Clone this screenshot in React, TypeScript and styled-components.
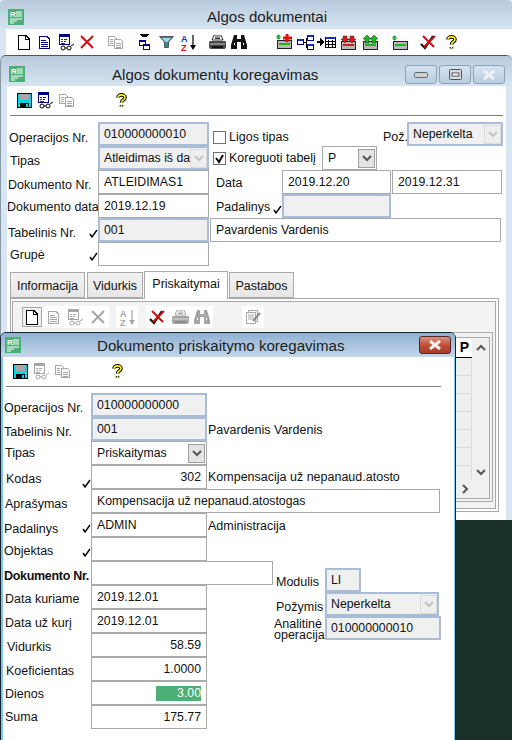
import React from "react";
import styled, { createGlobalStyle } from "styled-components";

const GlobalStyle = createGlobalStyle`
  html, body {
    margin: 0;
    padding: 0;
    background: #1a3129;
    overflow: hidden;
  }
`;

const FONT = '"Liberation Sans", Arial, sans-serif';
const FRAME = "#d8e5f2";
const GRAY = "#a9a9a9";

const Desktop = styled.div`
  position: relative;
  width: 512px;
  height: 740px;
  overflow: hidden;
  background: #1a3129;
  font-family: ${FONT};
  font-size: 12.5px;
  color: #111;
`;

const MainWindow = styled.div`
  position: absolute;
  left: 0;
  top: 0;
  width: 512px;
  height: 520px;
  background: ${FRAME};
`;

const EditWindow = styled.div`
  position: absolute;
  left: 0;
  top: 55px;
  width: 512px;
  height: 465px;
  box-sizing: border-box;
  background: ${FRAME};
  border-top: 1px solid #555;
  border-left: 1px solid #8a98a6;
  border-radius: 6px 6px 0 0;
`;

const DialogWindow = styled.div`
  position: absolute;
  left: 0;
  top: 332px;
  width: 456px;
  height: 420px;
  box-sizing: border-box;
  background: #fff;
  border: 1px solid #16222e;
  border-radius: 6px 6px 0 0;
  box-shadow: inset 2px 0 0 #7fc7e8, inset -1px 0 0 #7fc7e8;
`;

const TitleBar = styled.div<{ $h: number; $dark?: boolean; $iconX: number; $iconY: number; $textX: number; $textY: number }>`
  display: flex;
  box-sizing: border-box;
  height: ${(p) => p.$h}px;
  padding: ${(p) => p.$iconY}px 0 0 ${(p) => p.$iconX}px;
  border-radius: 5px 5px 0 0;
  background: ${(p) =>
    p.$dark
      ? "linear-gradient(#8fb0d2, #c3d7ea)"
      : "linear-gradient(#b8cadc, #d6e4f2)"};
  & > span {
    margin: ${(p) => p.$textY}px 0 0 ${(p) => p.$textX}px;
    font-size: 15.1px;
    line-height: 16px;
    color: #1c1c1c;
    white-space: nowrap;
  }
`;

const MainToolbar = styled.div`
  display: flex;
  align-items: center;
  height: 26px;
  margin-left: 6px;
  padding-left: 8px;
  background: #fff;
`;

const Slot = styled.div<{ $gap?: number }>`
  display: flex;
  flex: none;
  align-items: center;
  justify-content: center;
  width: 20px;
  height: 20px;
  margin-left: ${(p) => p.$gap || 0}px;
`;

const EditClient = styled.div`
  height: 434px;
  margin: 0 6px 0 6px;
  background: #fff;
`;

const SmallToolbar = styled.div<{ $pad: number; $lineLeft: number; $lineRight: number }>`
  display: flex;
  align-items: center;
  box-sizing: border-box;
  height: 30px;
  padding-left: ${(p) => p.$pad}px;
  margin-left: ${(p) => p.$lineLeft}px;
  margin-right: ${(p) => p.$lineRight}px;
  border-bottom: 1px solid #808080;
`;

const FormBlock = styled.div`
  display: flex;
  flex-direction: column;
  margin-top: 6px;
`;

const Row = styled.div`
  display: flex;
  height: 24px;
`;

const Label = styled.div<{ $w: number; $x?: number; $top: number; $bold?: boolean }>`
  display: flex;
  flex: none;
  justify-content: space-between;
  box-sizing: border-box;
  width: ${(p) => p.$w}px;
  padding: ${(p) => p.$top}px 0 0 ${(p) => p.$x || 0}px;
  font-weight: ${(p) => (p.$bold ? "bold" : "normal")};
  letter-spacing: ${(p) => (p.$bold ? "-0.3px" : "0")};
  line-height: 16px;
  white-space: nowrap;
`;

const Note = styled.div<{ $top: number; $left?: number; $w?: number }>`
  flex: none;
  width: ${(p) => (p.$w ? `${p.$w}px` : "auto")};
  padding-top: ${(p) => p.$top}px;
  margin-left: ${(p) => p.$left || 0}px;
  line-height: 16px;
  white-space: nowrap;
`;

const Field = styled.div<{ $w: number; $locked?: boolean; $right?: boolean; $left?: number }>`
  display: flex;
  flex: none;
  align-items: center;
  justify-content: ${(p) => (p.$right ? "flex-end" : "flex-start")};
  box-sizing: border-box;
  width: ${(p) => p.$w}px;
  height: 24px;
  margin-left: ${(p) => p.$left || 0}px;
  padding: 0 ${(p) => (p.$locked ? 4 : 5)}px;
  border: ${(p) => (p.$locked ? "2px solid #a9bdd6" : `1px solid ${GRAY}`)};
  background: ${(p) => (p.$locked ? "#f0f0f0" : "#fff")};
  font-size: 12.3px;
  white-space: nowrap;
  overflow: hidden;
`;

const SelectText = styled.span`
  flex: 1;
  overflow: hidden;
`;

const SelectButton = styled.div<{ $off?: boolean }>`
  display: flex;
  flex: none;
  align-items: center;
  justify-content: center;
  box-sizing: border-box;
  width: 17px;
  height: 19px;
  margin: 0 -4px 0 0;
  border: 1px solid ${(p) => (p.$off ? "#dcdcdc" : "#a0a0a0")};
  background: ${(p) => (p.$off ? "#eeeeee" : "#e4e4e4")};
`;

const Selected = styled.span`
  display: block;
  box-sizing: border-box;
  width: 45px;
  height: 15px;
  line-height: 15px;
  text-align: right;
  background: #4caf76;
  color: #fff;
`;

const CheckBox = styled.div<{ $top: number }>`
  display: flex;
  flex: none;
  align-items: center;
  justify-content: center;
  box-sizing: border-box;
  width: 13px;
  height: 13px;
  margin: ${(p) => p.$top}px 3px 0 4px;
  border: 1px solid #707070;
  background: #fff;
`;

const TabRow = styled.div`
  display: flex;
  align-items: flex-end;
  height: 26px;
  margin: 6px 0 0 3px;
`;

const Tab = styled.div<{ $w: number; $active?: boolean; $gap?: number }>`
  position: relative;
  z-index: ${(p) => (p.$active ? 1 : 0)};
  box-sizing: border-box;
  width: ${(p) => p.$w}px;
  height: ${(p) => (p.$active ? 28 : 26)}px;
  margin-left: ${(p) => p.$gap || 0}px;
  margin-bottom: ${(p) => (p.$active ? -1 : 0)}px;
  border: 1px solid ${GRAY};
  border-bottom: ${(p) => (p.$active ? "none" : `1px solid ${GRAY}`)};
  background: ${(p) => (p.$active ? "#fff" : "linear-gradient(#f2f2f2, #e6e6e6)")};
  line-height: ${(p) => (p.$active ? 24 : 26)}px;
  text-align: center;
  white-space: nowrap;
`;

const TabPanel = styled.div`
  box-sizing: border-box;
  width: 489px;
  height: 214px;
  margin-left: 3px;
  padding: 2px 2px 2px 1px;
  border: 1px solid ${GRAY};
  background: #fff;
`;

const TabInner = styled.div`
  display: flex;
  flex-direction: column;
  box-sizing: border-box;
  height: 100%;
  border: 1px solid ${GRAY};
  background: #f3f3f3;
`;

const PanelToolbar = styled.div`
  display: flex;
  flex: none;
  align-items: flex-start;
  height: 30px;
  padding: 4px 0 0 9px;
  box-sizing: border-box;
`;

const ActiveTool = styled.div`
  display: flex;
  align-items: center;
  justify-content: center;
  box-sizing: border-box;
  width: 20px;
  height: 20px;
  margin-top: 1px;
  border: 1px solid ${GRAY};
  background: #f0f0f0;
`;

const ToolTile = styled.div<{ $gap: number }>`
  display: flex;
  align-items: center;
  height: 22px;
  margin-left: ${(p) => p.$gap}px;
  padding: 0 1px;
  background: #fff;
`;

const GridOuter = styled.div`
  flex: 1;
  min-height: 0;
  margin: 0 2px 6px 2px;
  padding: 4px 2px 2px 2px;
  border: 1px solid ${GRAY};
  border-left: none;
  background: #f3f3f3;
`;

const GridBox = styled.div`
  display: grid;
  grid-template-columns: 1fr 17px;
  grid-template-rows: 1fr 18px;
  box-sizing: border-box;
  height: 100%;
  border: 1px solid ${GRAY};
  background: #efefef;
`;

const GridBody = styled.div`
  display: flex;
  flex-direction: column;
  overflow: hidden;
`;

const HeaderRow = styled.div`
  display: flex;
  flex: none;
  justify-content: flex-end;
  height: 19px;
  border-bottom: 1px solid #000;
  background: #fff;
`;

const HeaderCell = styled.div`
  width: 15px;
  font-size: 14px;
  font-weight: bold;
  line-height: 18px;
  text-align: center;
  color: #000;
`;

const DataRow = styled.div`
  flex: none;
  box-sizing: border-box;
  height: 18px;
  border-bottom: 1px solid #dcdcdc;
  border-right: 1px solid #dcdcdc;
`;

const VScroll = styled.div`
  display: flex;
  flex-direction: column;
  align-items: center;
  justify-content: space-between;
  padding: 6px 0 4px;
  background: #f0f0f0;
`;

const HScroll = styled.div`
  display: flex;
  grid-column: 1 / 3;
  align-items: center;
  justify-content: flex-end;
  padding-right: 20px;
  background: #f0f0f0;
`;

const WindowButtons = styled.div`
  display: flex;
  gap: 2px;
  margin: -1px 0 0 auto;
  padding-right: 7px;
`;

const WinButton = styled.div`
  display: flex;
  align-items: center;
  justify-content: center;
  box-sizing: border-box;
  width: 32px;
  height: 19px;
  border: 1px solid #8ea2b8;
  border-radius: 3px;
  background: linear-gradient(#d6e3f0, #b9cde0);
`;

const CloseButton = styled.div`
  display: flex;
  align-items: center;
  justify-content: center;
  box-sizing: border-box;
  width: 32px;
  height: 18px;
  margin: -1px 4px 0 auto;
  border: 1px solid #4e2a2a;
  border-radius: 3px;
  background: linear-gradient(#dc9183, #c14f38 50%, #a83a28);
`;

const BottomForm = styled.div`
  display: flex;
`;

const Column = styled.div<{ $top?: number; $left?: number }>`
  display: flex;
  flex-direction: column;
  margin-top: ${(p) => p.$top || 0}px;
  margin-left: ${(p) => p.$left || 0}px;
`;

const TwoLine = styled.div`
  flex: none;
  width: 51px;
  padding-top: 3px;
  line-height: 11px;
  white-space: nowrap;
`;

const TickMark = styled.svg<{ $top: number }>`
  flex: none;
  margin-top: ${(p) => p.$top}px;
`;

/* toolbar pictures */

type IconProps = { off?: boolean };
const off = (p: IconProps, c: string) => (p.off ? "#a6a6a6" : c);

const AppIcon = () => (
  <svg width="16" height="16" viewBox="0 0 16 16">
    <rect width="16" height="16" fill="#4caf76" />
    <text x="2" y="8" fontFamily={FONT} fontSize="8" fontWeight="bold" fill="#fff">R</text>
    <path d="M8 3h6M8 5h6M8 7h6M2 10h12M2 12h7M2 14h4" stroke="#fff" fill="none" />
  </svg>
);

const NewDoc = (p: IconProps) => (
  <svg width="12" height="15" viewBox="0 0 12 15" shapeRendering="crispEdges">
    <path d="M.5.5H8L11.5 4v10.500H.5z" fill="#fff" stroke={off(p, "#000")} />
    <path d="M7.500.5v4h4" fill="none" stroke={off(p, "#000")} />
  </svg>
);

const TextDoc = (p: IconProps) => (
  <svg width="11" height="13" viewBox="0 0 11 13" shapeRendering="crispEdges">
    <path d="M.5.5H8L10.500 3v9.500H.5z" fill="#fff" stroke={off(p, "#000080")} />
    <path d="M2 4h5M2 6h7M2 8h7M2 10h7" stroke={off(p, "#000080")} />
  </svg>
);

const Glasses = (p: IconProps) => (
  <svg width="17" height="17" viewBox="0 0 17 17">
    <rect x=".5" y=".5" width="10" height="10" fill="#fff" stroke={off(p, "#000080")} shapeRendering="crispEdges" />
    <rect x="1" y="1" width="9" height="2" fill={off(p, "#000080")} />
    <path d="M2 5h2M5 5h3M2 7h2M5 7h2M2 9h4" stroke={off(p, "#333")} shapeRendering="crispEdges" />
    <circle cx="4" cy="14" r="2" fill="#fff" stroke={off(p, "#000")} />
    <circle cx="10" cy="14" r="2" fill="#fff" stroke={off(p, "#000")} />
    <path d="M6 14h2M12 12l3-2" fill="none" stroke={off(p, "#000")} />
  </svg>
);

const RedX = (p: IconProps) => (
  <svg width="14" height="14" viewBox="0 0 14 14">
    <path d="M1 1l12 12M13 1L1 13" stroke={off(p, "#d01010")} strokeWidth="2" fill="none" />
  </svg>
);

const CopyDocs = (p: IconProps) => (
  <svg width="15" height="13" viewBox="0 0 15 13" shapeRendering="crispEdges">
    <path d="M.5.5h6l2 2v7H.5z" fill="#fff" stroke={off(p, "#000")} />
    <path d="M6.500 3.500h6l2 2v7h-8z" fill="#fff" stroke={off(p, "#000")} />
    <path d="M2 3h3M2 5h3M2 7h3M8 7h5M8 9h5M8 11h5" stroke={off(p, "#000")} />
  </svg>
);

const FilterWin = () => (
  <svg width="11" height="16" viewBox="0 0 11 16" shapeRendering="crispEdges">
    <path d="M0 0h10L7 3H3z" fill="#000" />
    <rect x=".5" y="6.500" width="6" height="5" fill="#fff" stroke="#000080" />
    <rect x="1" y="6" width="5" height="2" fill="#000080" />
    <rect x="4.500" y="10.500" width="6" height="5" fill="#fff" stroke="#000080" />
    <rect x="5" y="10" width="5" height="2" fill="#000080" />
  </svg>
);

const Funnel = () => (
  <svg width="15" height="12" viewBox="0 0 15 12">
    <path d="M.5.500h14l-5 5.500v5.500h-4V6z" fill="#2f8f8f" stroke="#555" />
    <path d="M3 2h9L8.500 6h-2z" fill="#9fd8d8" />
  </svg>
);

const SortAZ = (p: IconProps) => (
  <svg width="15" height="17" viewBox="0 0 15 17">
    <text x="0" y="8" fontFamily={FONT} fontSize="9" fontWeight="bold" fill={off(p, "#1030e0")}>A</text>
    <text x="0" y="16.500" fontFamily={FONT} fontSize="9" fontWeight="bold" fill={off(p, "#e01010")}>Z</text>
    <path d="M12 1v12" stroke={off(p, "#000")} strokeWidth="1.200" />
    <path d="M9 11h6l-3 5z" fill={off(p, "#000")} />
  </svg>
);

const Printer = (p: IconProps) => (
  <svg width="17" height="15" viewBox="0 0 17 15">
    <path d="M5 0h7l2 5H3z" fill="#fff" stroke={off(p, "#333")} />
    <path d="M6 2h5M6 3.500h5" stroke={off(p, "#333")} />
    <path d="M1 6h15a1 1 0 0 1 1 1v5a2 2 0 0 1-2 2H2a2 2 0 0 1-2-2V7z" fill={off(p, "#4a4a4a")} />
    <path d="M1 9h15" stroke={p.off ? "#d8d8d8" : "#bdbdbd"} />
    <path d="M3 12h11" stroke={p.off ? "#8c8c8c" : "#111"} strokeWidth="2" />
  </svg>
);

const Binoculars = (p: IconProps) => (
  <svg width="16" height="14" viewBox="0 0 16 14">
    <path d="M3 0h3v4h4V0h3l3 10v4h-6V7H6v7H0v-4z" fill={off(p, "#111")} />
    <path d="M3 9h1M12 9h1" stroke="#fff" strokeWidth="2" />
  </svg>
);

const Star = () => <path d="M0 3h5M2.500 .5v5M1 1l3 4M4 1L1 5" stroke="#22a030" fill="none" />;

const Tray = ({ band }: { band: string }) => (
  <g shapeRendering="crispEdges">
    <rect x="1.500" y="6.500" width="14" height="8" fill="#b8b8b8" stroke="#222" />
    <rect x="3" y="9" width="11" height="2" fill={band} />
  </g>
);

const TrayPlus = () => (
  <svg width="17" height="16" viewBox="0 0 17 16">
    <Tray band="#18b818" />
    <Star />
    <path d="M11 0v8M7 4h9" stroke="#e01010" strokeWidth="3" />
  </svg>
);

const TreeIcon = () => (
  <svg width="17" height="15" viewBox="0 0 17 15" shapeRendering="crispEdges">
    <path d="M6 7h3M9 3v9M9 3h2M9 12h2" stroke="#000" fill="none" />
    <rect x=".5" y="4.500" width="6" height="5" fill="#fff" stroke="#000080" />
    <rect x="1" y="4" width="5" height="2" fill="#1030c0" />
    <rect x="10.500" y=".5" width="6" height="5" fill="#fff" stroke="#000080" />
    <rect x="11" y="0" width="5" height="2" fill="#1030c0" />
    <rect x="10.500" y="9.500" width="6" height="5" fill="#fff" stroke="#000080" />
    <rect x="11" y="9" width="5" height="2" fill="#1030c0" />
  </svg>
);

const ArrowTable = () => (
  <svg width="19" height="13" viewBox="0 0 19 13" shapeRendering="crispEdges">
    <path d="M0 5h3V2l4 4-4 4V7H0z" fill="#000" />
    <rect x="8.500" y="1.500" width="10" height="10" fill="#fff" stroke="#000" />
    <rect x="9" y="1" width="9" height="2" fill="#1030c0" />
    <path d="M9 5.500h9M9 8.500h9M11.500 4v7M15.500 4v7" stroke="#000" />
  </svg>
);

const TrayArrows = ({ color, down }: { color: string; down?: boolean }) => (
  <svg width="16" height="15" viewBox="0 0 16 15">
    <g transform="translate(-1 0)"><Tray band={color} /></g>
    <path
      d={down ? "M2 1h4v3h2L4 8 0 4h2zM9 1h4v3h2l-4 4-4-4h2z" : "M4 0l4 4H6v4H2V4H0zM11 0l4 4h-2v4H9V4H7z"}
      fill={color}
      stroke="#222"
      strokeWidth=".5"
    />
  </svg>
);

const StarTray = () => (
  <svg width="17" height="15" viewBox="0 0 17 15">
    <Tray band="#18b818" />
    <Star />
  </svg>
);

const RedCheck = () => (
  <svg width="16" height="15" viewBox="0 0 16 15">
    <path d="M1 9l4 4 8-12" stroke="#111" strokeWidth="2.200" fill="none" />
    <path d="M3 1l11 11M15 1L4 12" stroke="#d01010" strokeWidth="2" fill="none" />
  </svg>
);

const Help = () => (
  <svg width="11" height="15" viewBox="0 0 11 15">
    <path d="M2 4.500C2 1 9 1 9 4.500 9 7 5.500 6.500 5.500 9.500M5.500 12v1.500" fill="none" stroke="#000" strokeWidth="3.600" />
    <path d="M2 4.500C2 1 9 1 9 4.500 9 7 5.500 6.500 5.500 9.500M5.500 12v1.500" fill="none" stroke="#ffee00" strokeWidth="1.600" />
  </svg>
);

const Save = () => (
  <svg width="15" height="15" viewBox="0 0 15 15" shapeRendering="crispEdges">
    <rect x=".5" y=".5" width="14" height="14" fill="#00d8e8" stroke="#000" />
    <rect x="3" y="1" width="9" height="6" fill="#a8a8a8" />
    <rect x="3" y="10" width="9" height="5" fill="#000" />
    <rect x="9" y="11" width="2" height="3" fill="#00d8e8" />
  </svg>
);

const NoteIcon = () => (
  <svg width="16" height="16" viewBox="0 0 16 16">
    <path d="M3.500 1.500h9v11h-9z" fill="#fff" stroke="#a6a6a6" />
    <path d="M1.500 3.500h9v11h-9z" fill="#fff" stroke="#a6a6a6" />
    <path d="M3 6h6M3 8h6M3 10h5" stroke="#a6a6a6" />
    <path d="M8 12l7-8" stroke="#8a8a8a" strokeWidth="2" />
  </svg>
);

const Chevron = ({ up, color = "#555" }: { up?: boolean; color?: string }) => (
  <svg width="10" height="7" viewBox="0 0 10 7">
    <path d={up ? "M1 6l4-4 4 4" : "M1 1l4 4 4-4"} fill="none" stroke={color} strokeWidth="2" />
  </svg>
);

const ChevronRight = () => (
  <svg width="7" height="10" viewBox="0 0 7 10">
    <path d="M1 1l4 4-4 4" fill="none" stroke="#555" strokeWidth="2" />
  </svg>
);

const Tick = ({ top }: { top: number }) => (
  <TickMark $top={top} width="9" height="9" viewBox="0 0 9 9">
    <path d="M1 5l2 3 5-7" fill="none" stroke="#000" strokeWidth="1.400" />
  </TickMark>
);

const CloseGlyph = ({ color }: { color: string }) => (
  <svg width="14" height="10" viewBox="0 0 14 10">
    <path d="M2 1l10 8M12 1L2 9" stroke={color} strokeWidth="3" />
  </svg>
);

const mainTools: [React.ReactNode, number][] = [
  [<NewDoc />, 0],
  [<TextDoc />, 0],
  [<Glasses />, 3],
  [<RedX />, 0],
  [<CopyDocs off />, 8],
  [<FilterWin />, 9],
  [<Funnel />, 2],
  [<SortAZ />, 2],
  [<Printer />, 9],
  [<Binoculars />, 2],
  [<TrayPlus />, 25],
  [<TreeIcon />, 1],
  [<ArrowTable />, 1],
  [<TrayArrows color="#e01818" down />, 3],
  [<TrayArrows color="#18b818" />, 2],
  [<StarTray />, 9],
  [<RedCheck />, 8],
  [<Help />, 3],
];

const gridRows = [0, 1, 2, 3, 4, 5, 6];

export default function App() {
  return (
    <Desktop>
      <GlobalStyle />

      <MainWindow>
        <TitleBar $h={29} $iconX={8} $iconY={9} $textX={183} $textY={0}>
          <AppIcon />
          <span>Algos dokumentai</span>
        </TitleBar>
        <MainToolbar>
          {mainTools.map(([icon, gap], i) => (
            <Slot key={i} $gap={gap}>{icon}</Slot>
          ))}
        </MainToolbar>
      </MainWindow>

      <EditWindow>
        <TitleBar $h={30} $iconX={8} $iconY={10} $textX={87} $textY={1}>
          <AppIcon />
          <span>Algos dokumentų koregavimas</span>
          <WindowButtons>
            <WinButton>
              <svg width="14" height="6" viewBox="0 0 14 6"><rect x=".5" y=".5" width="13" height="5" rx="1" fill="#d0d0d0" stroke="#606a75" /></svg>
            </WinButton>
            <WinButton>
              <svg width="13" height="11" viewBox="0 0 13 11"><rect x=".5" y=".5" width="12" height="10" rx="1" fill="#d8d8d8" stroke="#4a5560" /><rect x="3" y="4" width="7" height="3" fill="#fff" stroke="#4a5560" /></svg>
            </WinButton>
            <WinButton><CloseGlyph color="#eef2f6" /></WinButton>
          </WindowButtons>
        </TitleBar>
        <EditClient>
          <SmallToolbar $pad={4} $lineLeft={3} $lineRight={3}>
            <Slot><Save /></Slot>
            <Slot $gap={2}><Glasses /></Slot>
            <Slot><CopyDocs off /></Slot>
            <Slot $gap={35}><Help /></Slot>
          </SmallToolbar>

          <FormBlock>
            <Row>
              <Label $w={91} $x={2} $top={8}>Operacijos Nr.</Label>
              <Field $w={111} $locked>010000000010</Field>
              <CheckBox $top={9} />
              <Note $top={7} $w={154}>Ligos tipas</Note>
              <Note $top={7} $w={24}>Pož.</Note>
              <Field $w={96} $locked>
                <SelectText>Neperkelta</SelectText>
                <SelectButton $off><Chevron color="#c4c4c4" /></SelectButton>
              </Field>
            </Row>
            <Row>
              <Label $w={91} $x={3} $top={7}>Tipas</Label>
              <Field $w={111} $locked>
                <SelectText>Atleidimas iš da</SelectText>
                <SelectButton $off><Chevron color="#c4c4c4" /></SelectButton>
              </Field>
              <CheckBox $top={6}>
                <svg width="11" height="11" viewBox="0 0 11 11"><path d="M2 5l3 4 4-7" fill="none" stroke="#000" strokeWidth="2" /></svg>
              </CheckBox>
              <Note $top={4} $w={93}>Koreguoti tabelį</Note>
              <Field $w={55}>
                <SelectText>P</SelectText>
                <SelectButton><Chevron /></SelectButton>
              </Field>
            </Row>
            <Row>
              <Label $w={91} $x={1} $top={7}>Dokumento Nr.</Label>
              <Field $w={111}>ATLEIDIMAS1</Field>
              <Note $top={5} $left={7} $w={66}>Data</Note>
              <Field $w={109}>2019.12.20</Field>
              <Field $w={110} $left={1}>2019.12.31</Field>
            </Row>
            <Row>
              <Label $w={91} $top={5}>Dokumento data</Label>
              <Field $w={111}>2019.12.19</Field>
              <Label $w={73} $x={7} $top={5}>
                Padalinys
                <Tick top={6} />
              </Label>
              <Field $w={109} $locked />
            </Row>
            <Row>
              <Label $w={91} $x={1} $top={7}>
                Tabelinis Nr.
                <Tick top={4} />
              </Label>
              <Field $w={111} $locked>001</Field>
              <Field $w={291} $left={1}>Pavardenis Vardenis</Field>
            </Row>
            <Row>
              <Label $w={91} $x={3} $top={5}>
                Grupė
                <Tick top={5} />
              </Label>
              <Field $w={111} />
            </Row>
          </FormBlock>

          <TabRow>
            <Tab $w={75}>Informacija</Tab>
            <Tab $w={56} $gap={2}>Vidurkis</Tab>
            <Tab $w={84} $gap={1} $active>Priskaitymai</Tab>
            <Tab $w={65} $gap={1}>Pastabos</Tab>
          </TabRow>
          <TabPanel>
            <TabInner>
              <PanelToolbar>
                <ActiveTool><NewDoc /></ActiveTool>
                <ToolTile $gap={0}>
                  <Slot><TextDoc off /></Slot>
                  <Slot $gap={3}><Glasses off /></Slot>
                  <Slot $gap={2}><RedX off /></Slot>
                </ToolTile>
                <ToolTile $gap={7}><Slot><SortAZ off /></Slot></ToolTile>
                <ToolTile $gap={8}>
                  <Slot><RedCheck /></Slot>
                  <Slot $gap={3}><Printer off /></Slot>
                  <Slot $gap={2}><Binoculars off /></Slot>
                </ToolTile>
                <ToolTile $gap={29}><Slot><NoteIcon /></Slot></ToolTile>
              </PanelToolbar>
              <GridOuter>
                <GridBox>
                  <GridBody>
                    <HeaderRow><HeaderCell>P</HeaderCell></HeaderRow>
                    {gridRows.map((r) => <DataRow key={r} />)}
                  </GridBody>
                  <VScroll>
                    <Chevron up />
                    <Chevron />
                  </VScroll>
                  <HScroll><ChevronRight /></HScroll>
                </GridBox>
              </GridOuter>
            </TabInner>
          </TabPanel>
        </EditClient>
      </EditWindow>

      <DialogWindow>
        <TitleBar $h={24} $dark $iconX={4} $iconY={4} $textX={76} $textY={1}>
          <AppIcon />
          <span>Dokumento priskaitymo koregavimas</span>
          <CloseButton><CloseGlyph color="#f4f0ee" /></CloseButton>
        </TitleBar>
        <SmallToolbar $pad={4} $lineLeft={5} $lineRight={14}>
          <Slot><Save /></Slot>
          <Slot $gap={2}><Glasses off /></Slot>
          <Slot><CopyDocs off /></Slot>
          <Slot $gap={35}><Help /></Slot>
        </SmallToolbar>

        <FormBlock>
          <Row>
            <Label $w={90} $x={3} $top={7}>Operacijos Nr.</Label>
            <Field $w={116} $locked>010000000000</Field>
          </Row>
          <Row>
            <Label $w={90} $x={3} $top={7}>Tabelinis Nr.</Label>
            <Field $w={116} $locked>001</Field>
            <Note $top={5} $left={1}>Pavardenis Vardenis</Note>
          </Row>
          <Row>
            <Label $w={90} $x={4} $top={4}>Tipas</Label>
            <Field $w={116}>
              <SelectText>Priskaitymas</SelectText>
              <SelectButton><Chevron /></SelectButton>
            </Field>
          </Row>
          <Row>
            <Label $w={90} $x={5} $top={6}>
              Kodas
              <Tick top={8} />
            </Label>
            <Field $w={116} $right>302</Field>
            <Note $top={4} $left={1}>Kompensacija už nepanaud.atosto</Note>
          </Row>
          <Row>
            <Label $w={90} $x={4} $top={7}>Aprašymas</Label>
            <Field $w={349}>Kompensacija už nepanaud.atostogas</Field>
          </Row>
          <Row>
            <Label $w={90} $x={3} $top={8}>
              Padalinys
              <Tick top={3} />
            </Label>
            <Field $w={116}>ADMIN</Field>
            <Note $top={5} $left={1}>Administracija</Note>
          </Row>
          <Row>
            <Label $w={90} $x={3} $top={6}>
              Objektas
              <Tick top={5} />
            </Label>
            <Field $w={116} />
          </Row>
          <BottomForm>
            <Column>
              <Row>
                <Label $w={90} $x={3} $top={7} $bold>Dokumento Nr.</Label>
                <Field $w={182} />
              </Row>
              <Row>
                <Label $w={90} $x={4} $top={6}>Data kuriame</Label>
                <Field $w={116}>2019.12.01</Field>
              </Row>
              <Row>
                <Label $w={90} $x={4} $top={6}>Data už kurį</Label>
                <Field $w={116}>2019.12.01</Field>
              </Row>
              <Row>
                <Label $w={90} $x={6} $top={6}>Vidurkis</Label>
                <Field $w={116} $right>58.59</Field>
              </Row>
              <Row>
                <Label $w={90} $x={5} $top={6}>Koeficientas</Label>
                <Field $w={116} $right>1.0000</Field>
              </Row>
              <Row>
                <Label $w={90} $x={4} $top={5}>Dienos</Label>
                <Field $w={116} $right><Selected>3.00</Selected></Field>
              </Row>
              <Row>
                <Label $w={90} $x={4} $top={4}>Suma</Label>
                <Field $w={116} $right>175.77</Field>
              </Row>
            </Column>
            <Column $top={7} $left={1}>
              <Row>
                <Label $w={51} $x={2} $top={6}>Modulis</Label>
                <Field $w={36} $locked>LI</Field>
              </Row>
              <Row>
                <Label $w={51} $x={2} $top={7}>Požymis</Label>
                <Field $w={114} $locked>
                  <SelectText>Neperkelta</SelectText>
                  <SelectButton $off><Chevron color="#c4c4c4" /></SelectButton>
                </Field>
              </Row>
              <Row>
                <TwoLine>Analitinė<br />operacija</TwoLine>
                <Field $w={116} $locked>010000000010</Field>
              </Row>
            </Column>
          </BottomForm>
        </FormBlock>
      </DialogWindow>
    </Desktop>
  );
}
